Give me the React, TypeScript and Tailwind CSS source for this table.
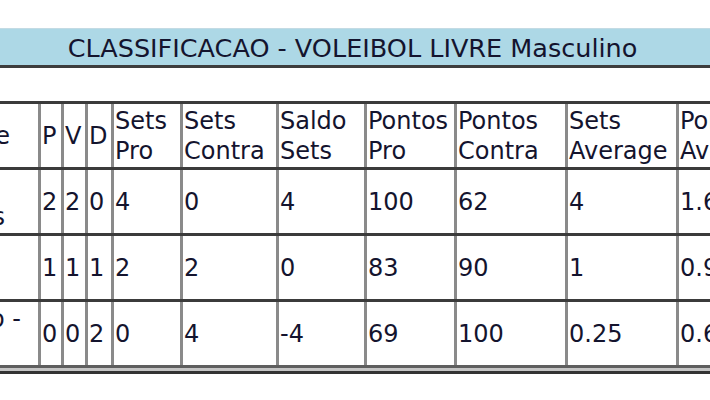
type Line = { text: string; pad: string };

type Team = {
  name: Line[];
  values: string[];
};

const gridCols =
  "grid grid-cols-[400px_20px_21px_23px_66px_93px_85px_87px_108px_108px_130px] gap-x-[3px] bg-[#8a8a8a]";

const headers = [
  "P",
  "V",
  "D",
  "Sets Pro",
  "Sets Contra",
  "Saldo Sets",
  "Pontos Pro",
  "Pontos Contra",
  "Sets Average",
  "Pontos Average",
];

const teams: Team[] = [
  {
    name: [
      { text: "Associação Esportiva", pad: "pr-[62px]" },
      { text: "Amigos Unidos", pad: "pr-[32px]" },
    ],
    values: ["2", "2", "0", "4", "0", "4", "100", "62", "4", "1.6129"],
  },
  {
    name: [
      { text: "Clube Atlético", pad: "pr-[60px]" },
      { text: "Vila Nova", pad: "pr-[70px]" },
    ],
    values: ["1", "1", "1", "2", "2", "0", "83", "90", "1", "0.9222"],
  },
  {
    name: [
      { text: "Grêmio Recreativo -", pad: "pr-[16px]" },
      { text: "Bela Vista", pad: "pr-[66px]" },
    ],
    values: ["0", "0", "2", "0", "4", "-4", "69", "100", "0.25", "0.69"],
  },
];

const cell = "bg-white px-[1px] py-[1.5px] leading-[30px] flex flex-col justify-center";

export default function App() {
  return (
    <div className="w-[710px] h-[400px] overflow-hidden bg-white text-[#14142e] font-['DejaVu_Sans','Verdana',sans-serif]">
      {/* Title bar */}
      <div className="mt-[28px] border-t border-[#c3dbe4] border-b-[3px] border-b-[#3d3d3d] bg-[#add8e6] pt-[4px] pb-[2px] pr-[5px] text-center text-[25.5px] leading-[30px]">
        CLASSIFICACAO - VOLEIBOL LIVRE Masculino
      </div>

      {/* Standings table */}
      <div className="mt-[33px] ml-[-362px] w-max text-[24px] border-t-[3px] border-[#3b3b3b]">
        <div className={gridCols}>
          <div className={cell}>
            <div className="text-right whitespace-nowrap pr-[27px]">Equipe</div>
          </div>
          {headers.map((h) => (
            <div key={h} className={cell}>
              {h}
            </div>
          ))}
        </div>

        {teams.map((t, i) => (
          <div key={i} className={`${gridCols} border-t-[3px] border-[#3b3b3b]`}>
            <div className={cell}>
              {t.name.map((l) => (
                <div key={l.text} className={`text-right whitespace-nowrap ${l.pad}`}>
                  {l.text}
                </div>
              ))}
            </div>
            {t.values.map((v, j) => (
              <div key={j} className={cell}>
                {v}
              </div>
            ))}
          </div>
        ))}

        {/* Bottom edge */}
        <div className="h-[3px] bg-[#5e5e5e]" />
        <div className="h-[3px] bg-[#c4c4c4]" />
        <div className="h-[3px] bg-[#333333]" />
      </div>
    </div>
  );
}
